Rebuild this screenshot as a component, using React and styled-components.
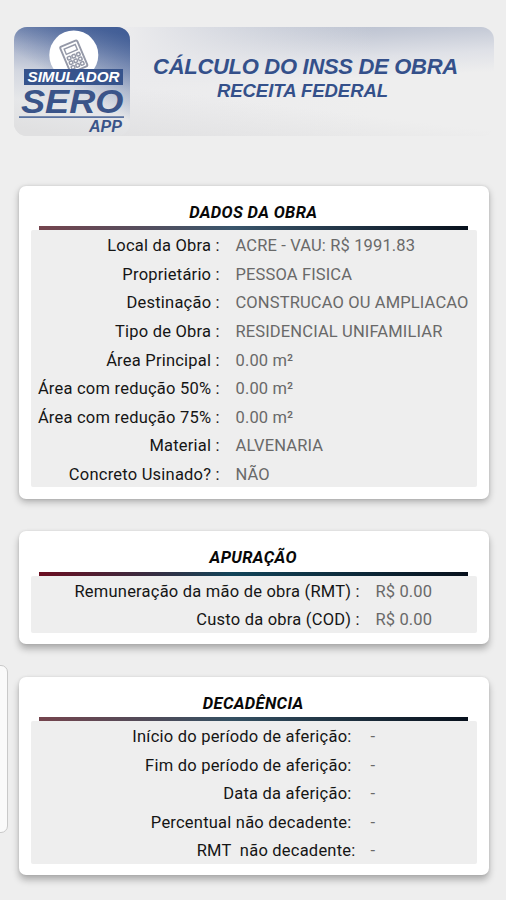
import React from 'react'
import styled, { createGlobalStyle } from 'styled-components'

const GlobalStyle = createGlobalStyle`
  * {
    box-sizing: border-box;
  }
  body {
    margin: 0;
    background: #eeeeee;
    font-family: Roboto, 'Liberation Sans', sans-serif;
  }
`

const Page = styled.div`
  position: relative;
  height: 900px;
  padding: 27px 17px 0 14px;
  overflow: hidden;
`

const Banner = styled.header`
  display: flex;
  width: 480px;
  height: 109px;
  border-radius: 13px;
  background: linear-gradient(
      187deg,
      rgba(238, 238, 238, 0) 62%,
      rgba(222, 222, 223, 0.95) 100%
    ),
    linear-gradient(to right, #ebebed 24%, rgba(238, 238, 238, 0) 75%),
    linear-gradient(177deg, #b0b8ca 3%, #c6cbd7 20%, #dfe1e7 36%, #eeeeee 52%);
`

const Logo = styled.svg`
  flex: none;
  width: 117px;
  height: 109px;
`

const Titles = styled.div`
  flex: 1;
  display: flex;
  flex-direction: column;
  align-items: center;
  padding: 27px 14px 0 0;
  font-family: 'Liberation Sans', Arial, sans-serif;
  font-weight: bold;
  font-style: italic;
  color: #34508a;
  white-space: nowrap;
`

const Title = styled.h1`
  margin: 0;
  font-size: 22px;
  line-height: 25px;
  letter-spacing: -0.3px;
`

const Subtitle = styled.h2`
  margin: 0;
  padding-right: 6px;
  font-size: 18.5px;
  line-height: 23px;
  letter-spacing: -0.03px;
`

const Cards = styled.main`
  display: flex;
  flex-direction: column;
  gap: 32.5px;
  margin: 50px 0 0 4.5px;
`

const Card = styled.section`
  width: 470.5px;
  padding: 0 12px 11.5px;
  border-radius: 7px;
  background: #fff;
  box-shadow: 0 ${({ $lift }) => $lift}px 7px rgba(0, 0, 0, 0.27),
    0 0 3px rgba(0, 0, 0, 0.1);
`

const CardTitle = styled.h3`
  margin: 0 9px 0 8px;
  height: 44.4px;
  padding: 15px 0 0 0;
  border-bottom: 4px solid;
  border-image: linear-gradient(
      to right,
      ${({ $from }) => $from},
      ${({ $middle }) => $middle} 45%,
      #07101c
    )
    1;
  font-size: 16.5px;
  line-height: 24px;
  font-weight: 700;
  font-style: italic;
  letter-spacing: 0.35px;
  text-align: center;
  color: #080808;
`

const Rows = styled.dl`
  margin: 0;
  border-radius: 2px;
  background: #eeeeee;
`

const Row = styled.div`
  display: flex;
  height: 28.55px;
  font-size: 16.5px;
  line-height: 31px;
  letter-spacing: 0.14px;
  white-space: pre;
`

const Label = styled.dt`
  width: ${({ $width }) => $width}px;
  text-align: right;
  letter-spacing: 0.22px;
  color: #151515;
`

const Value = styled.dd`
  margin: 0 0 0 ${({ $gap }) => $gap}px;
  color: #696969;
`

// Edge of the side panel that stays visible over the page
const SideTab = styled.aside`
  position: absolute;
  left: -20px;
  top: 665px;
  width: 28px;
  height: 168px;
  border: 1px solid #c9c9c9;
  border-radius: 7px;
  background: #fafafa;
`

const sections = [
  {
    title: 'DADOS DA OBRA',
    labelWidth: 189.3,
    gap: 15.7,
    lift: 3,
    from: '#75444d',
    middle: '#3a566c',
    rows: [
      ['Local da Obra :', 'ACRE - VAU: R$ 1991.83'],
      ['Proprietário :', 'PESSOA FISICA'],
      ['Destinação :', 'CONSTRUCAO OU AMPLIACAO'],
      ['Tipo de Obra :', 'RESIDENCIAL UNIFAMILIAR'],
      ['Área Principal :', '0.00 m²'],
      ['Área com redução 50% :', '0.00 m²'],
      ['Área com redução 75% :', '0.00 m²'],
      ['Material :', 'ALVENARIA'],
      ['Concreto Usinado? :', 'NÃO'],
    ],
  },
  {
    title: 'APURAÇÃO',
    labelWidth: 329.3,
    gap: 15.7,
    lift: 5,
    from: '#6b0d20',
    middle: '#124459',
    rows: [
      ['Remuneração da mão de obra (RMT) :', 'R$ 0.00'],
      ['Custo da obra (COD) :', 'R$ 0.00'],
    ],
  },
  {
    title: 'DECADÊNCIA',
    labelWidth: 321,
    gap: 19,
    lift: 5,
    from: '#75444d',
    middle: '#345062',
    rows: [
      ['Início do período de aferição:', '-'],
      ['Fim do período de aferição:', '-'],
      ['Data da aferição:', '-'],
      ['Percentual não decadente:', '-'],
      ['RMT  não decadente:', '-', 4],
    ],
  },
]

const keys = [0, 1, 2].flatMap((row) => [0, 1, 2].map((col) => [col, row]))

const AppLogo = () => (
  <Logo viewBox="0 0 117 109">
    <defs>
      <linearGradient id="sky" x1="0.62" y1="0" x2="0.42" y2="1">
        <stop offset="0" stopColor="#6479a6" />
        <stop offset="0.25" stopColor="#a3aec8" />
        <stop offset="0.5" stopColor="#d3d7e0" />
        <stop offset="0.75" stopColor="#e6e7e9" />
        <stop offset="1" stopColor="#e0e0e1" />
      </linearGradient>
      <linearGradient id="corner" x1="1" y1="0" x2="0.6" y2="0.62">
        <stop offset="0" stopColor="#2f4f8e" stopOpacity="0.7" />
        <stop offset="1" stopColor="#2f4f8e" stopOpacity="0" />
      </linearGradient>
    </defs>
    <rect width="116" height="109" rx="13" fill="url(#sky)" />
    <rect width="116" height="109" rx="13" fill="url(#corner)" />
    <circle cx="59.8" cy="28" r="24.5" fill="#fff" />
    <g
      transform="translate(60 29.5) rotate(-23)"
      fill="#fff"
      stroke="#9599a8"
      strokeWidth="1.9"
    >
      <rect x="-9.5" y="-14" width="18.5" height="28" rx="1.5" />
      <rect x="-6.2" y="-10.6" width="12" height="5.6" strokeWidth="1.4" />
      {keys.map(([col, row]) => (
        <rect
          key={`${col}-${row}`}
          x={-6.8 + col * 5}
          y={-2 + row * 5}
          width="3.4"
          height="3.2"
          rx="1"
          strokeWidth="1.5"
        />
      ))}
    </g>
    <rect x="10" y="42" width="99" height="16" fill="#36538c" />
    <g
      fontFamily="'Liberation Sans', Arial, sans-serif"
      fontWeight="bold"
      fontStyle="italic"
      fill="#3a5489"
    >
      <text
        x="13.5"
        y="55"
        fontSize="15"
        textLength="92"
        lengthAdjust="spacingAndGlyphs"
        fill="#fff"
      >
        SIMULADOR
      </text>
      <text
        x="7"
        y="86"
        fontSize="32.5"
        textLength="102.5"
        lengthAdjust="spacingAndGlyphs"
      >
        SERO
      </text>
      <text x="75" y="104.5" fontSize="16" textLength="33">
        APP
      </text>
    </g>
    <rect x="5" y="89.3" width="105" height="1.6" fill="#4b6597" />
  </Logo>
)

const Section = ({ title, labelWidth, gap, lift, from, middle, rows }) => (
  <Card $lift={lift}>
    <CardTitle $from={from} $middle={middle}>
      {title}
    </CardTitle>
    <Rows>
      {rows.map(([label, value, shift = 0]) => (
        <Row key={label}>
          <Label $width={labelWidth + shift}>{label}</Label>
          <Value $gap={gap - shift}>{value}</Value>
        </Row>
      ))}
    </Rows>
  </Card>
)

const App = () => {
  return (
    <Page>
      <GlobalStyle />
      <Banner>
        <AppLogo />
        <Titles>
          <Title>CÁLCULO DO INSS DE OBRA</Title>
          <Subtitle>RECEITA FEDERAL</Subtitle>
        </Titles>
      </Banner>
      <Cards>
        {sections.map((section) => (
          <Section key={section.title} {...section} />
        ))}
      </Cards>
      <SideTab />
    </Page>
  )
}

export default App
